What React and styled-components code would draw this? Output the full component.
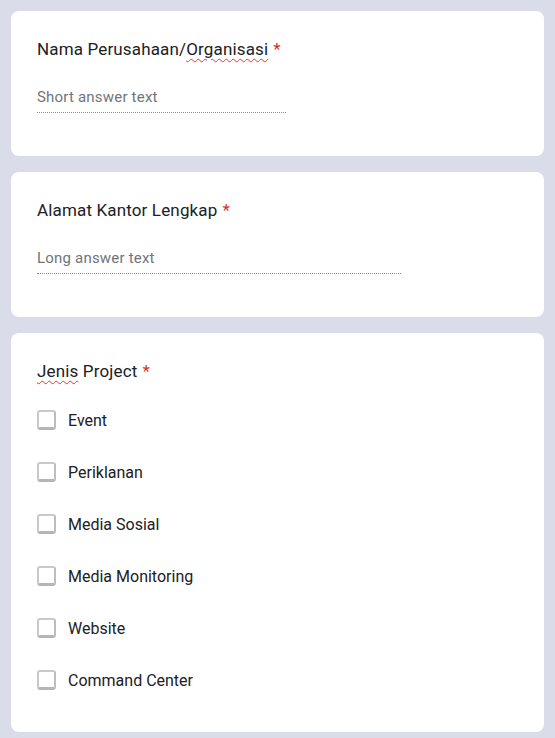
import React from 'react'
import styled, { createGlobalStyle } from 'styled-components'

const GlobalStyle = createGlobalStyle`
  body {
    margin: 0;
    background-color: #dbdcea;
    font-family: Roboto, "Liberation Sans", Arial, sans-serif;
  }
`;

const Page = styled.div`
  display: flex;
  flex-direction: column;
  gap: 16px;
  padding: 11px;
`;

const Card = styled.section`
  background-color: #fff;
  border-radius: 8px;
  padding: 26px 26px 26px;
`;

const Title = styled.div`
  font-size: 17px;
  line-height: 24px;
  letter-spacing: 0.15px;
  color: #202124;
`;

const Misspelled = styled.span`
  text-decoration: underline wavy #e53935;
  text-decoration-thickness: 1px;
  text-underline-offset: 3px;
`;

const Required = styled.span`
  color: #d93025;
  margin-left: 5px;
`;

const AnswerField = styled.div`
  width: ${(p) => p.$width}px;
  margin-top: 26px;
  padding-bottom: 5px;
  border-bottom: 1px dotted #8a8a8a;
  font-size: 15px;
  line-height: 20px;
  letter-spacing: 0.2px;
  color: #70757a;
  margin-bottom: 17px;
`;

const Options = styled.div`
  display: flex;
  flex-direction: column;
  margin-top: 11px;
`;

const Option = styled.label`
  display: flex;
  align-items: center;
  gap: 12px;
  height: 52px;
  font-size: 16px;
  color: #202124;
`;

const Box = styled.span`
  box-sizing: border-box;
  width: 19px;
  height: 20px;
  border: 2px solid #c9c9c9;
  border-right-color: #bdbdbd;
  border-bottom: 3px solid #b5b5b5;
  border-radius: 3px;
  background: #fff;
`;

const projects = ['Event', 'Periklanan', 'Media Sosial', 'Media Monitoring', 'Website', 'Command Center'];

export default function App() {
  return (
    <>
      <GlobalStyle />
      <Page>
        <Card>
          <Title>
            Nama Perusahaan/<Misspelled>Organisasi</Misspelled>
            <Required>*</Required>
          </Title>
          <AnswerField $width={249}>Short answer text</AnswerField>
        </Card>

        <Card>
          <Title>
            Alamat Kantor Lengkap<Required>*</Required>
          </Title>
          <AnswerField $width={364}>Long answer text</AnswerField>
        </Card>

        <Card>
          <Title>
            <Misspelled>Jenis</Misspelled> Project<Required>*</Required>
          </Title>
          <Options>
            {projects.map((p) => (
              <Option key={p}>
                <Box />
                {p}
              </Option>
            ))}
          </Options>
        </Card>
      </Page>
    </>
  );
}
